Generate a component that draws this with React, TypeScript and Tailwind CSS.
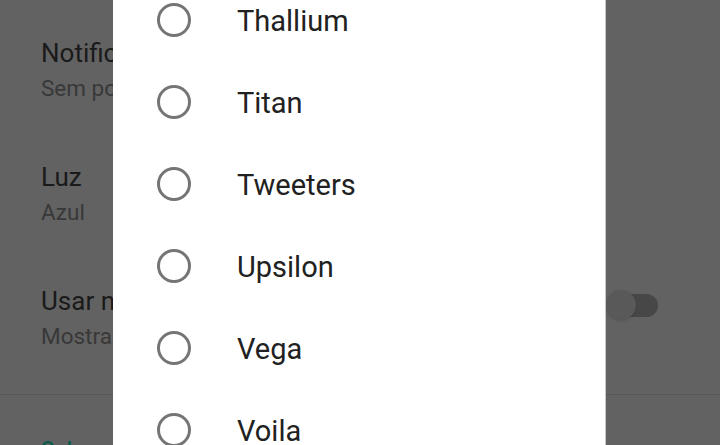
const options = ['Thallium', 'Titan', 'Tweeters', 'Upsilon', 'Vega', 'Voila'];

const settings = [
  { title: 'Notificações', subtitle: 'Sem pop-up', mt: 'mt-0' },
  { title: 'Luz', subtitle: 'Azul', mt: 'mt-[54px]' },
  { title: 'Usar notificações', subtitle: 'Mostrar prioridade', mt: 'mt-[54px]', toggle: true },
];

function Radio() {
  return <span className="block w-[34px] h-[34px] rounded-full border-[3px] border-[#757575] shrink-0" />;
}

export default function App() {
  return (
    <div
      className="relative w-[720px] h-[445px] overflow-hidden bg-[#626262]"
      style={{ fontFamily: 'Roboto, "Noto Sans", sans-serif' }}
    >
      {/* settings page behind the dim */}
      <div className="flex flex-col pt-[36px]">
        {settings.map((s) => (
          <div key={s.title} className={`${s.mt} flex items-center pl-[41px] pr-[62px]`}>
            <div className="flex-1 flex flex-col">
              <span className="text-[26px] leading-[34px] text-[#1a1a1a] whitespace-nowrap">{s.title}</span>
              <span className="text-[22.5px] leading-[36px] text-[#383838] whitespace-nowrap">{s.subtitle}</span>
            </div>
            {s.toggle && (
              <div className="relative w-[52px] h-[30px] flex items-center -mt-[28px]">
                <span className="absolute left-[15px] w-[37px] h-[23px] rounded-full bg-[#474747]" />
                <span className="absolute left-0 w-[30px] h-[30px] rounded-full bg-[#595959] shadow" />
              </div>
            )}
          </div>
        ))}
        <div className="mt-[40px] h-px bg-[#575757]" />
        <span className="mt-[38px] pl-[41px] text-[22px] leading-[34px] text-[#0e5c4f] font-medium">Sobre</span>
      </div>

      {/* dialog */}
      <div className="absolute left-[113px] top-0 w-[493px] h-full bg-white border-r border-[#c8c8c8]">
        <ul className="flex flex-col -mt-[21px]">
          {options.map((o) => (
            <li key={o} className="h-[82px] flex items-center pl-[44px]">
              <Radio />
              <span className="ml-[46px] mt-[3px] text-[29px] text-[#212121]">{o}</span>
            </li>
          ))}
        </ul>
      </div>
    </div>
  );
}
